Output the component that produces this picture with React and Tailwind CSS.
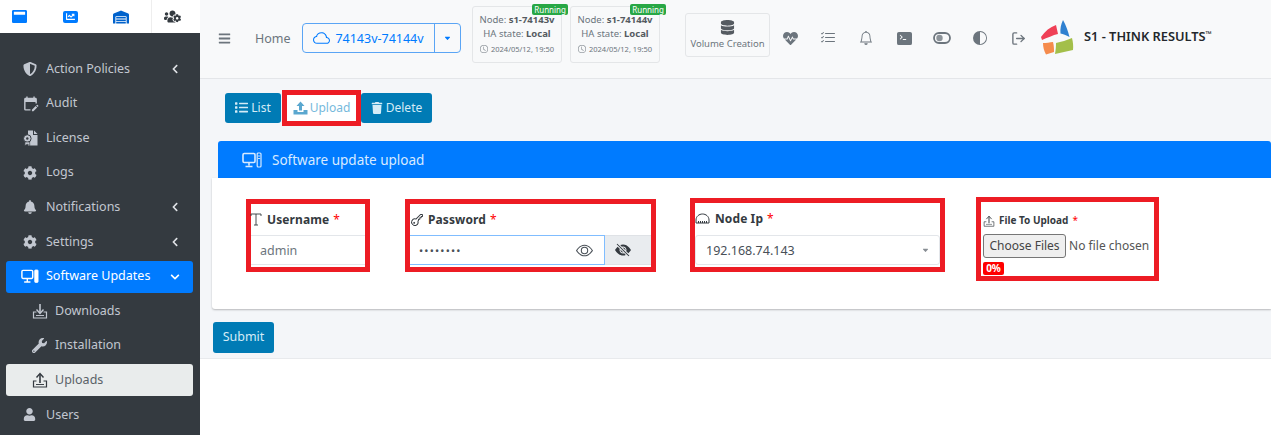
import React from "react";
import { BsEye, BsEyeSlashFill, BsTerminalFill, BsListCheck, BsBell, BsClock, BsCloud, BsCaretDownFill, BsCircleHalf, BsKey } from "react-icons/bs";
import { FaShieldAlt, FaCog, FaBell, FaUser, FaWrench, FaWarehouse, FaUsersCog, FaWindowMaximize, FaChartLine, FaChevronLeft, FaChevronDown, FaBars, FaDatabase, FaHeartbeat, FaList, FaTrash } from "react-icons/fa";
import { MdEditCalendar } from "react-icons/md";
import { LogOut } from "lucide-react";

const font = { fontFamily: '"Noto Sans", "Open Sans", sans-serif' };

function Tray({ up, size = 17, width = 1.2, className = "" }) {
  return (
    <svg width={size} height={size} viewBox="0 0 16 16" fill="none" stroke="currentColor" strokeWidth={width} className={className}>
      <path d="M4.5 9 H1.5 V15 H14.5 V9 H11.5" />
      <path d="M4 12.5 H12" strokeWidth={width * 0.8} />
      {up ? (
        <>
          <path d="M8 11 V2" strokeWidth={width + 0.4} />
          <path d="M4.5 5.5 L8 1.5 L11.5 5.5" strokeWidth={width + 0.2} />
        </>
      ) : (
        <>
          <path d="M8 1 V10" strokeWidth={width + 0.4} />
          <path d="M4.5 6.5 L8 10.5 L11.5 6.5" strokeWidth={width + 0.2} />
        </>
      )}
    </svg>
  );
}

function SolidUpload({ className = "" }) {
  return (
    <svg width="15" height="14" viewBox="0 0 15 14" fill="currentColor" className={className}>
      <path d="M7.5 0.5 L11.5 5 H9 V9.5 H6 V5 H3.5 Z" />
      <path d="M0.5 9 H4.5 V11 H10.5 V9 H14.5 V13.5 H0.5 Z" />
    </svg>
  );
}

function ToggleIcon() {
  return (
    <svg width="18" height="12" viewBox="0 0 18 12" fill="none">
      <rect x="1" y="1" width="16" height="10" rx="5" stroke="#6c757d" strokeWidth="1.8" />
      <circle cx="6.5" cy="6" r="3.2" fill="#8d949a" />
    </svg>
  );
}

function PcIcon({ solid, size = 18, className = "" }) {
  return (
    <svg width={size} height={size * 0.8} viewBox="0 0 20 16" fill="none" stroke="currentColor" strokeWidth="1.6" className={className}>
      <rect x="1" y="1.5" width="12" height="9" rx="1.2" />
      <path d="M7 11 V13.5 M3.5 14.5 H10.5" strokeWidth="1.6" />
      <rect x="15.2" y="1" width="3.8" height="14" rx="1" fill={solid ? "currentColor" : "none"} strokeWidth={solid ? 0.8 : 1.2} />
      {!solid && <path d="M16 4 H18.2 M16 6.5 H18.2" strokeWidth="0.9" />}
    </svg>
  );
}

function LicenseIcon() {
  return (
    <svg width="15" height="16" viewBox="0 0 15 16" fill="currentColor">
      <path d="M5 0.5 H10 V5 H14.5 V15.5 H5 Z" />
      <path d="M11 0.5 L14.5 4 H11 Z" />
      <circle cx="4.3" cy="8.5" r="3.8" fill="currentColor" stroke="#343a40" strokeWidth="1" />
      <circle cx="4.3" cy="8.5" r="1.2" fill="#343a40" />
      <path d="M2 12 L1.8 15.5 L4.3 14.3 L6.8 15.5 L6.6 12 Z" stroke="#343a40" strokeWidth="0.6" />
    </svg>
  );
}

function Item({ icon, label, chevron, active, light, sub }) {
  const cls = active
    ? "bg-[#007bff] text-white"
    : light
    ? "bg-[#e9ecec] text-[#5a6268]"
    : "text-[#c2c7d0]";
  return (
    <div className={`ml-[6px] mr-[7px] h-[32px] mb-[2.6px] rounded-[3px] flex items-center text-[12.5px] ${cls} ${sub ? "pl-[26px]" : "pl-[17px]"}`}>
      <span className={`w-[22px] flex justify-start ${light ? "text-[#343a40]" : ""}`}>{icon}</span>
      <span className="ml-[1px] flex-1">{label}</span>
      {chevron === "left" && <FaChevronLeft className="text-[10px] mr-[13px] text-[#dfe2e6]" />}
      {chevron === "down" && <FaChevronDown className="text-[10px] mr-[13px] text-white" />}
    </div>
  );
}

function Sidebar() {
  return (
    <aside className="w-[200px] shrink-0 h-[435px] bg-[#343a40] shadow-[1px_0_4px_rgba(0,0,0,0.35)] flex flex-col overflow-hidden">
      <div className="h-[33px] bg-white flex shrink-0">
        <div className="w-[50px] pr-[12px] flex items-center justify-center text-[#007bff] text-[15px]"><FaWindowMaximize /></div>
        <div className="w-[50px] pr-[10px] flex items-center justify-center">
          <span className="bg-[#007bff] rounded-[2px] px-[3px] text-white text-[9px] h-[12px] flex items-center"><FaChartLine /></span>
        </div>
        <div className="w-[51px] pr-[9px] flex items-center justify-center text-[#0062cc] text-[16px]"><FaWarehouse /></div>
        <div className="w-[49px] pr-[8px] flex items-center justify-center text-[#343a40] text-[17px] border-l border-[#eeeeee]"><FaUsersCog /></div>
      </div>
      <div className="pt-[20px]">
        <Item icon={<FaShieldAlt className="text-[14px]" />} label="Action Policies" chevron="left" />
        <Item icon={<MdEditCalendar className="text-[17px] -ml-[1px]" />} label="Audit" />
        <Item icon={<LicenseIcon />} label="License" />
        <Item icon={<FaCog className="text-[14px]" />} label="Logs" />
        <Item icon={<FaBell className="text-[14px]" />} label="Notifications" chevron="left" />
        <Item icon={<FaCog className="text-[14px]" />} label="Settings" chevron="left" />
        <Item active icon={<PcIcon solid className="-ml-[2px]" />} label="Software Updates" chevron="down" />
        <Item sub icon={<Tray size={16} />} label="Downloads" />
        <Item sub icon={<FaWrench className="text-[15px]" />} label="Installation" />
        <Item sub light icon={<Tray up size={16} />} label="Uploads" />
        <Item icon={<FaUser className="text-[13px]" />} label="Users" />
      </div>
    </aside>
  );
}

function NodeCard({ name }) {
  return (
    <div className="relative w-[90px] h-[57px] border border-[#e4e6e8] rounded-[3px] bg-[#f8f9fa] flex flex-col items-center justify-center text-[9.5px] leading-[14.5px] text-[#6c757d]">
      <span className="absolute -top-[3px] -right-[7px] bg-[#28a745] text-white text-[8px] leading-[11px] px-[2px] rounded-[2px]">Running</span>
      <div>Node: <b className="text-[#555b61]">{name}</b></div>
      <div>HA state: <b className="text-[#555b61]">Local</b></div>
      <div className="flex items-center gap-[3px] text-[7.5px]"><BsClock className="text-[8px]" />2024/05/12, 19:50</div>
    </div>
  );
}

function Logo() {
  return (
    <svg width="38" height="38" viewBox="0 0 38 38" className="shrink-0">
      <path d="M1 18 C5 12 10 8 16 6 L18 15 C13 16 7 19 2 21Z" fill="#ef4056" />
      <path d="M23 1 C26 6 28 12 29.5 18 C26 16 23 15 20.5 14.5 C20 10 21 5 23 1Z" fill="#2f80d0" />
      <path d="M16 24 C21 23 27 21 32 19 C33 23 33.5 27 33 31 L15 35 C15.8 31 16 27 16 24Z" fill="#a3bf4a" />
      <path d="M3 24 C6 24 10 23.5 13 23 C14 27 14 30 14 33 L6 35.5 C4 32 3 28 3 24Z" fill="#f58b4c" />
    </svg>
  );
}

function Header() {
  const ic = "w-[38px] flex justify-center text-[#6c757d]";
  return (
    <header className="h-[79px] bg-[#f8f9fa] border-b border-[#e4e6e9] flex items-center shrink-0 pb-[2px]">
      <FaBars className="ml-[18px] text-[13px] text-[#6c757d]" />
      <span className="ml-[24px] w-[37px] text-[12.5px] text-[#6c757d] pt-[2px]">Home</span>
      <div className="ml-[10px] w-[159px] h-[30px] flex border border-[#5aa5f5] rounded-[4px] text-[#007bff] text-[12.5px]">
        <div className="w-[132px] flex items-center justify-center gap-[5px] border-r border-[#5aa5f5]"><BsCloud className="text-[17px]" /><span className="pt-[2px]">74143v-74144v</span></div>
        <div className="flex-1 flex items-center justify-center"><BsCaretDownFill className="text-[7px]" /></div>
      </div>
      <div className="ml-[11px] -mt-[7px]"><NodeCard name="s1-74143v" /></div>
      <div className="ml-[8px] -mt-[7px]"><NodeCard name="s1-74144v" /></div>
      <div className="ml-[25px] -mt-[7px] w-[85px] h-[44px] border border-[#e4e6e8] rounded-[3px] flex flex-col items-center justify-center text-[#6c757d] text-[9.5px] leading-[13px]">
        <FaDatabase className="text-[15px] text-[#555b61]" />
        <span className="mt-[2px]">Volume Creation</span>
      </div>
      <div className="ml-[1px] flex items-center">
        <span className={ic}><FaHeartbeat className="text-[15px]" /></span>
        <span className={ic}><BsListCheck className="text-[16px]" /></span>
        <span className={ic}><BsBell className="text-[14px]" /></span>
        <span className={ic}><BsTerminalFill className="text-[15px]" /></span>
        <span className={ic}><ToggleIcon /></span>
        <span className={ic}><BsCircleHalf className="text-[14px]" /></span>
        <span className={ic}><LogOut size={15} strokeWidth={2.2} /></span>
      </div>
      <div className="ml-[3px] flex items-center">
        <Logo />
        <span className="ml-[6px] text-[12.8px] font-semibold text-[#23272b] -mt-[3px]">S1 - THINK RESULTS<sup className="text-[8px]">™</sup></span>
      </div>
    </header>
  );
}

const box = "border-[5px] border-[#ed1c24]";
const btn = "h-[30px] rounded-[3px] bg-[#007bb5] text-[#d5ecf7] text-[12px] flex items-center justify-center gap-[3px]";

function Label({ icon, text, small }) {
  return (
    <div className={`flex items-center h-[17px] font-bold text-[#343a40] ${small ? "text-[10px]" : "text-[12px] tracking-[0.1px]"}`}>
      {icon}
      <span>{text}</span>
      <span className="ml-[4px] text-[#ff0000] font-normal">*</span>
    </div>
  );
}

function NodeIcon() {
  return (
    <svg width="15" height="11" viewBox="0 0 15 11" fill="none" stroke="#343a40" strokeWidth="1" className="mr-[5px]">
      <path d="M1 10 V7 C1 3.5 4 1 7.5 1 S14 3.5 14 7 V10 Z" />
      <path d="M3.5 10 V8 M5.5 10 V8 M7.5 10 V8 M9.5 10 V8 M11.5 10 V8" />
    </svg>
  );
}

function TIcon() {
  return (
    <svg width="12" height="13" viewBox="0 0 12 13" fill="none" stroke="#343a40" strokeWidth="0.9" className="-ml-[1px] mr-[5px]">
      <path d="M1 3 V1 H11 V3 M6 1 V12 M4 12 H8" />
    </svg>
  );
}

export default function App() {
  return (
    <div className="w-[1271px] h-[435px] flex overflow-hidden bg-white" style={font}>
      <Sidebar />
      <main className="flex-1 min-w-0 flex flex-col">
        <Header />
        <div className="h-[280px] bg-[#f4f6f9] border-b border-[#e8eaed] shrink-0 pl-[12px]">
          <div className="flex items-center h-[56px] pl-[13px] pt-[1px]">
            <div className={`${btn} w-[56px]`}><FaList className="text-[13px]" />List</div>
            <div className={`${box} bg-white w-[79px] h-[36px] flex items-center justify-center gap-[2px] text-[12px] text-[#76b9dc] ml-[1px]`}><SolidUpload className="text-[#5aa7cf]" />Upload</div>
            <div className={`${btn} w-[71px]`}><FaTrash className="text-[12px]" />Delete</div>
          </div>
          <section className="mt-[6px]">
            <div className="ml-[6px] h-[37px] bg-[#007bff] text-[#d8eaff] text-[13.5px] flex items-center pl-[24px] gap-[10px] rounded-t-[3px]">
              <PcIcon size={20} />
              <span className="pt-[1px]">Software update upload</span>
            </div>
            <div className="h-[131px] bg-white rounded-bl-[3px] shadow-[0_1px_2px_rgba(0,0,0,0.25)] flex items-start pt-[21px] pl-[34px]">
              <div className={`${box} w-[124px] h-[73px] flex flex-col pt-[7px]`}>
                <Label icon={<TIcon />} text="Username" />
                <div className="mt-[7px] h-[30px] shrink-0 flex items-center pl-[9px] pt-[3px] text-[12.5px] text-[#6c757d] border-y border-[#e3e6ea]">admin</div>
              </div>
              <div className={`${box} ml-[35px] w-[251px] h-[73px] flex flex-col pt-[7px]`}>
                <Label icon={<BsKey className="text-[15px] mr-[3px] -rotate-45" />} text="Password" />
                <div className="mt-[7px] h-[30px] shrink-0 flex">
                  <div className="flex-1 border border-[#80bdff] border-l-0 flex items-center justify-between pl-[9px] pr-[11px] text-[#495057]">
                    <span className="text-[11px] tracking-[1.2px] pt-[2px]">••••••••</span>
                    <BsEye className="text-[17px]" />
                  </div>
                  <div className="w-[46px] bg-[#e9ecef] flex items-center pl-[10px] border-y border-[#dfe2e6]"><BsEyeSlashFill className="text-[16px] text-[#343a40]" /></div>
                </div>
              </div>
              <div className={`${box} ml-[34px] w-[255px] h-[74px] -mt-[1px] flex flex-col pt-[7px]`}>
                <Label icon={<NodeIcon />} text="Node Ip" />
                <div className="mt-[8px] h-[30px] shrink-0 flex items-center justify-between pl-[10px] pr-[10px] text-[12.5px] text-[#495057] border border-[#e3e6ea] rounded-[3px]">
                  <span className="pt-[3px]">192.168.74.143</span>
                  <BsCaretDownFill className="text-[7px] text-[#888e94]" />
                </div>
              </div>
              <div className={`${box} ml-[31px] w-[183px] h-[84px] -mt-[2px] flex flex-col pl-[2px] pt-[10px]`}>
                <Label small icon={<Tray up size={12} width={0.9} className="mr-[4px]" />} text="File To Upload" />
                <input type="file" multiple className="mt-[5px] w-[171px] text-[12px] text-[#555] file:bg-[#efefef] file:border file:border-solid file:border-[#767676] file:rounded-[3px] file:px-[5.5px] file:h-[24px] file:mr-[3px] file:text-[12px] file:text-[#444]" />
                <span className="mt-[4px] w-[21px] h-[13px] rounded-[2px] bg-[#ff0000] text-white text-[10px] font-bold leading-[13px] text-center">0%</span>
              </div>
            </div>
          </section>
          <div className="mt-[13px] w-[61px] h-[31px] rounded-[3px] bg-[#007bb5] text-[#d5ecf7] text-[12.5px] flex items-center justify-center ml-[1px]">Submit</div>
        </div>
        <div className="flex-1 bg-white" />
      </main>
    </div>
  );
}
